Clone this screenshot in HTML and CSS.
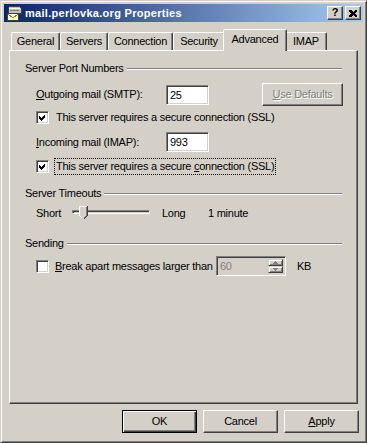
FILE: index.html
```html
<!DOCTYPE html>
<html>
<head>
<meta charset="utf-8">
<link rel="stylesheet" href="styles.css">
</head>
<body>
<div class="window">
  <div class="titlebar">
    <svg class="appicon" width="16" height="16" viewBox="0 0 16 16" shape-rendering="crispEdges">
      <path d="M4 1h9l2 2v5H2V3z" fill="#c0c0c0" stroke="#404040" stroke-width="1"/>
      <path d="M3 3h11" stroke="#fff"/>
      <path d="M4 5h9" stroke="#808080"/>
      <rect x="1.5" y="8.5" width="11" height="7" fill="#ffffc0" stroke="#404040"/>
      <path d="M2 9l5 4 5-4" fill="none" stroke="#808040"/>
    </svg>
    <span class="title">mail.perlovka.org Properties</span>
    <div class="tbtns">
      <div class="tbtn q">?</div>
      <div class="tbtn">
        <svg width="8" height="7" viewBox="0 0 8 7" shape-rendering="crispEdges"><path d="M0 0h2l2 2 2-2h2v1L6 3.5 8 6v1H6L4 5 2 7H0V6l2-2.5L0 1z" fill="#000"/></svg>
      </div>
    </div>
  </div>

  <div class="tabs">
    <div class="tab w-general">General</div>
    <div class="tab w-servers">Servers</div>
    <div class="tab w-connection">Connection</div>
    <div class="tab w-security">Security</div>
    <div class="tab sel w-advanced">Advanced</div>
    <div class="tab w-imap">IMAP</div>
  </div>

  <div class="panel">
    <div class="group-head g1"><span>Server Port Numbers</span><div class="etch"></div></div>

    <div class="row r-out">
      <span class="lbl"><u>O</u>utgoing mail (SMTP):</span>
      <div class="field">25</div>
      <div class="spacer"></div>
      <div class="btn disabled defaults"><span><u>U</u>se Defaults</span></div>
    </div>

    <div class="row r-chk1">
      <div class="chk"><svg width="9" height="9" viewBox="0 0 9 9" shape-rendering="crispEdges"><polygon points="1,3 3,5 7,1 7,4 3,8 1,6" fill="#000"/></svg></div>
      <span class="chklbl">This server requires a secure connection (SSL)</span>
    </div>

    <div class="row r-in">
      <span class="lbl"><u>I</u>ncoming mail (IMAP):</span>
      <div class="field">993</div>
    </div>

    <div class="row r-chk2">
      <div class="chk"><svg width="9" height="9" viewBox="0 0 9 9" shape-rendering="crispEdges"><polygon points="1,3 3,5 7,1 7,4 3,8 1,6" fill="#000"/></svg></div>
      <span class="chklbl focus">This server requires a secure <u>c</u>onnection (SSL)</span>
    </div>

    <div class="group-head g2"><span>Server Timeouts</span><div class="etch"></div></div>

    <div class="row r-slider">
      <span class="s-short">Short</span>
      <div class="slider">
        <div class="track"></div>
        <svg class="thumb" width="9" height="14" viewBox="0 0 9 14" shape-rendering="crispEdges">
          <path d="M0 0h9v9l-4 4h-1l-4-4z" fill="#d4d0c8"/>
          <path d="M0.5 9V0.5h8" fill="none" stroke="#fff"/>
          <path d="M8.5 0v9.5l-4 4" fill="none" stroke="#404040"/>
          <path d="M7.5 1v8.5l-3 3" fill="none" stroke="#808080"/>
          <path d="M0.5 9.5l3 3" fill="none" stroke="#fff"/>
        </svg>
      </div>
      <span class="s-long">Long</span>
      <span>1 minute</span>
    </div>

    <div class="group-head g3"><span>Sending</span><div class="etch"></div></div>

    <div class="row r-chk3">
      <div class="chk"></div>
      <div class="brkbox"><span class="chklbl brk"><u>B</u>reak apart messages larger than</span></div>
      <div class="spin">
        <span class="spinval">60</span>
        <div class="spinbtns">
          <div class="sb"><svg width="5" height="3" viewBox="0 0 5 3" shape-rendering="crispEdges"><path d="M2 0h1v1h1v1h1v1H0V2h1V1h1z" fill="#808080"/></svg></div>
          <div class="sb"><svg width="5" height="3" viewBox="0 0 5 3" shape-rendering="crispEdges"><path d="M0 0h5v1H4v1H3v1H2V2H1V1H0z" fill="#808080"/></svg></div>
        </div>
      </div>
      <span class="kb">KB</span>
    </div>
  </div>

  <div class="buttons">
    <div class="btn default"><span>OK</span></div>
    <div class="btn"><span>Cancel</span></div>
    <div class="btn"><span><u>A</u>pply</span></div>
  </div>
</div>
</body>
</html>
```

FILE: styles.css
```css
* { box-sizing: border-box; }
html, body { margin: 0; padding: 0; }
body {
  background: #d4d0c8;
  font-family: "Liberation Sans", Arial, sans-serif;
  font-size: 11px;
  letter-spacing: -0.25px;
  color: #000;
  line-height: 13px;
}
u { text-decoration: underline; text-underline-offset: 1px; }

.window {
  width: 367px;
  height: 443px;
  border: 1px solid;
  border-color: #d4d0c8 #404040 #404040 #d4d0c8;
  box-shadow: inset 1px 1px #fff, inset -1px -1px #808080;
  padding: 3px;
  display: flex;
  flex-direction: column;
}

.titlebar {
  height: 18px;
  background: linear-gradient(to right, #0a246a, #a6caf0);
  display: flex;
  align-items: center;
  padding: 0 2px 0 2px;
}
.appicon { flex: none; margin-right: 3px; }
.title {
  color: #fff;
  font-weight: bold;
  font-size: 11px;
  letter-spacing: 0.3px;
  flex: 1;
  white-space: nowrap;
}
.tbtns { display: flex; gap: 2px; }
.tbtn {
  width: 16px;
  height: 14px;
  background: #d4d0c8;
  border: 1px solid;
  border-color: #fff #404040 #404040 #fff;
  box-shadow: inset -1px -1px #808080;
  display: flex;
  align-items: center;
  justify-content: center;
  font-weight: bold;
  font-size: 11px;
  line-height: 11px;
  letter-spacing: 0;
}
.tbtn.q { padding-bottom: 1px; }

.tabs {
  display: flex;
  align-items: flex-end;
  height: 21px;
  margin-top: 7px;
  margin-left: 7px;
}
.tab {
  height: 18px;
  border: 1px solid;
  border-bottom: none;
  border-color: #fff #404040 transparent #fff;
  box-shadow: inset -1px 0 #808080;
  border-radius: 2px 2px 0 0;
  text-align: center;
  padding-top: 2px;
  white-space: nowrap;
}
.tab.sel {
  height: 22px;
  margin: 0 -2px -1px -2px;
  position: relative;
  z-index: 1;
  background: #d4d0c8;
  padding-top: 3px;
}
.w-general { width: 49px; }
.w-servers { width: 48px; }
.w-connection { width: 65px; }
.w-security { width: 52px; }
.w-advanced { width: 64px; }
.w-imap { width: 42px; }

.panel {
  width: 349px;
  height: 354px;
  margin-left: 5px;
  border: 1px solid;
  border-color: #fff #404040 #404040 #fff;
  box-shadow: inset -1px -1px #808080;
  display: flex;
  flex-direction: column;
}

.group-head {
  display: flex;
  align-items: center;
  height: 13px;
  margin-left: 15px;
  margin-right: 15px;
  white-space: nowrap;
}
.etch {
  flex: 1;
  height: 2px;
  border-top: 1px solid #808080;
  border-bottom: 1px solid #fff;
  margin-left: 3px;
  margin-top: 1px;
}
.g1 { margin-top: 11px; }
.g2 { margin-top: 13px; }
.g3 { margin-top: 17px; }

.row {
  display: flex;
  align-items: center;
  margin-left: 26px;
  white-space: nowrap;
}
.lbl { width: 130px; flex: none; }
.field {
  width: 43px;
  height: 20px;
  background: #fff;
  border: 1px solid;
  border-color: #808080 #fff #fff #808080;
  box-shadow: inset 1px 1px #404040, inset -1px -1px #d4d0c8;
  padding: 3px 0 0 3px;
}
.spacer { flex: 1; }
.r-out { height: 23px; margin-top: 8px; margin-right: 14px; }
.r-chk1 { height: 15px; margin-top: 4px; }
.r-in { height: 20px; margin-top: 7px; }
.r-chk2 { height: 16px; margin-top: 6px; }
.r-slider { height: 14px; margin-top: 6px; }
.r-chk3 { height: 20px; margin-top: 6px; }

.chk {
  width: 13px;
  height: 13px;
  flex: none;
  background: #fff;
  border: 1px solid;
  border-color: #808080 #fff #fff #808080;
  box-shadow: inset 1px 1px #404040, inset -1px -1px #d4d0c8;
  padding: 1px;
  display: flex;
}
.chklbl {
  margin-left: 5px;
  padding: 1px 1px;
  border: 1px solid transparent;
}
.chklbl.focus { border: 1px dotted #000; }

.btn {
  width: 75px;
  height: 23px;
  background: #d4d0c8;
  border: 1px solid;
  border-color: #fff #404040 #404040 #fff;
  box-shadow: inset -1px -1px #808080;
  display: flex;
  align-items: center;
  justify-content: center;
  padding-bottom: 1px;
}
.btn.defaults { width: 81px; }
.btn.disabled span { color: #808080; text-shadow: 1px 1px #fff; }
.btn.default {
  border: 1px solid #000;
  box-shadow: inset 1px 1px #fff, inset -1px -1px #404040, inset -2px -2px #808080;
}

.s-short { width: 36px; flex: none; }
.slider {
  position: relative;
  width: 78px;
  height: 14px;
  flex: none;
}
.track {
  margin-top: 4px;
  height: 4px;
  border: 1px solid;
  border-color: #808080 #fff #fff #808080;
  box-shadow: inset 1px 1px #404040;
}
.thumb { position: absolute; left: 7px; top: 0; }
.s-long { width: 46px; margin-left: 12px; flex: none; }

.brkbox { width: 167px; flex: none; display: flex; }
.brk { margin-left: 4px; }
.spin {
  width: 70px;
  height: 20px;
  border: 1px solid;
  border-color: #808080 #fff #fff #808080;
  box-shadow: inset 1px 1px #404040, inset -1px -1px #d4d0c8;
  display: flex;
  padding: 2px;
}
.spinval { flex: 1; color: #808080; padding: 1px 0 0 1px; }
.spinbtns { display: flex; flex-direction: column; width: 15px; }
.sb {
  flex: 1;
  border: 1px solid;
  border-color: #d4d0c8 #404040 #404040 #d4d0c8;
  box-shadow: inset 1px 1px #fff, inset -1px -1px #808080;
  display: flex;
  align-items: center;
  justify-content: center;
}
.kb { margin-left: 11px; }

.buttons {
  display: flex;
  justify-content: flex-end;
  gap: 6px;
  margin-top: 6px;
  margin-right: 4px;
}
```
